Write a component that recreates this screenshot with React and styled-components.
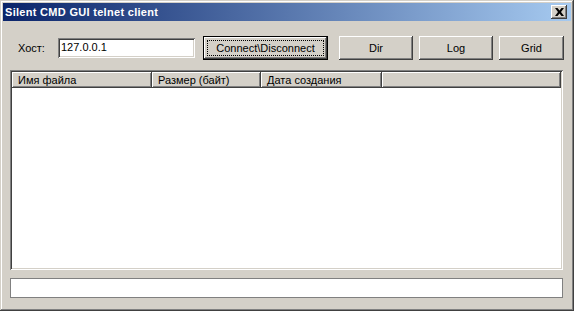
import React from "react";
import styled, { createGlobalStyle } from "styled-components";

const GlobalStyle = createGlobalStyle`
  html, body {
    margin: 0;
    padding: 0;
    background: #d4d0c8;
  }
  * {
    box-sizing: border-box;
  }
`;

const Window = styled.div`
  width: 574px;
  height: 311px;
  padding: 3px;
  background: #d4d0c8;
  font-family: "Liberation Sans", Arial, sans-serif;
  font-size: 11px;
  color: #000;
  display: flex;
  flex-direction: column;
  box-shadow: inset -1px -1px 0 #404040, inset 1px 1px 0 #d4d0c8,
    inset -2px -2px 0 #808080, inset 2px 2px 0 #ffffff;
`;

const TitleBar = styled.div`
  height: 18px;
  display: flex;
  align-items: center;
  justify-content: space-between;
  padding: 0 4px 0 2px;
  background: linear-gradient(to right, #0a246a, #a6caf0);
`;

const Title = styled.span`
  color: #fff;
  font-weight: bold;
  font-size: 11px;
  letter-spacing: 0.3px;
`;

const CloseButton = styled.div`
  width: 16px;
  height: 14px;
  display: flex;
  align-items: center;
  justify-content: center;
  background: #d4d0c8;
  box-shadow: inset -1px -1px 0 #404040, inset 1px 1px 0 #ffffff,
    inset -2px -2px 0 #808080;
`;

const Body = styled.div`
  flex: 1;
  display: flex;
  flex-direction: column;
  padding: 15px 7px 0 7px;
`;

const HostRow = styled.div`
  height: 24px;
  display: flex;
  align-items: center;
`;

const Label = styled.span`
  margin-left: 8px;
  width: 40px;
`;

const Input = styled.div`
  width: 137px;
  height: 20px;
  background: #fff;
  padding: 3px 3px 0 3px;
  box-shadow: inset 1px 1px 0 #808080, inset -1px -1px 0 #ffffff,
    inset 2px 2px 0 #404040, inset -2px -2px 0 #d4d0c8;
`;

const Button = styled.div`
  width: ${(p) => p.$w}px;
  height: 24px;
  margin-left: ${(p) => p.$gap}px;
  display: flex;
  align-items: center;
  justify-content: center;
  background: #d4d0c8;
  position: relative;
  box-shadow: ${(p) =>
    p.$focused
      ? "inset -1px -1px 0 #000, inset 1px 1px 0 #000, inset -2px -2px 0 #404040, inset 2px 2px 0 #ffffff, inset -3px -3px 0 #808080"
      : "inset -1px -1px 0 #404040, inset 1px 1px 0 #ffffff, inset -2px -2px 0 #808080"};
`;

const FocusRing = styled.span`
  position: absolute;
  left: 4px;
  top: 4px;
  right: 4px;
  bottom: 4px;
  border: 1px dotted #000;
`;

const ListView = styled.div`
  margin-top: 10px;
  height: 200px;
  width: 553px;
  background: #fff;
  padding: 2px;
  box-shadow: inset 1px 1px 0 #808080, inset -1px -1px 0 #ffffff,
    inset 2px 2px 0 #404040, inset -2px -2px 0 #d4d0c8;
`;

const Header = styled.div`
  display: flex;
  height: 16px;
`;

const HeaderCell = styled.div`
  width: ${(p) => (p.$w ? `${p.$w}px` : "auto")};
  flex: ${(p) => (p.$w ? "none" : 1)};
  display: flex;
  align-items: center;
  padding-left: 6px;
  background: #d4d0c8;
  white-space: nowrap;
  box-shadow: inset -1px -1px 0 #404040, inset 1px 1px 0 #ffffff,
    inset -2px -2px 0 #808080;
`;

const StatusField = styled.div`
  margin-top: 8px;
  width: 553px;
  height: 20px;
  background: #fff;
  border: 1px solid #808080;
  box-shadow: inset -1px -1px 0 #ffffff;
`;

export default function App() {
  return (
    <>
      <GlobalStyle />
      <Window>
        <TitleBar>
          <Title>Silent CMD GUI telnet client</Title>
          <CloseButton>
            <svg width="9" height="8" viewBox="0 0 9 8">
              <path
                d="M0 0h2.5l2 2.5 2-2.5H9L6 4l3 4H6.5l-2-2.5-2 2.5H0l3-4z"
                fill="#000"
              />
            </svg>
          </CloseButton>
        </TitleBar>
        <Body>
          <HostRow>
            <Label>Хост:</Label>
            <Input>127.0.0.1</Input>
            <Button $w={125} $gap={8} $focused>
              <FocusRing />
              Connect\Disconnect
            </Button>
            <Button $w={74} $gap={11}>Dir</Button>
            <Button $w={74} $gap={6}>Log</Button>
            <Button $w={65} $gap={6}>Grid</Button>
          </HostRow>
          <ListView>
            <Header>
              <HeaderCell $w={140}>Имя файла</HeaderCell>
              <HeaderCell $w={109}>Размер (байт)</HeaderCell>
              <HeaderCell $w={121}>Дата создания</HeaderCell>
              <HeaderCell />
            </Header>
          </ListView>
          <StatusField />
        </Body>
      </Window>
    </>
  );
}
